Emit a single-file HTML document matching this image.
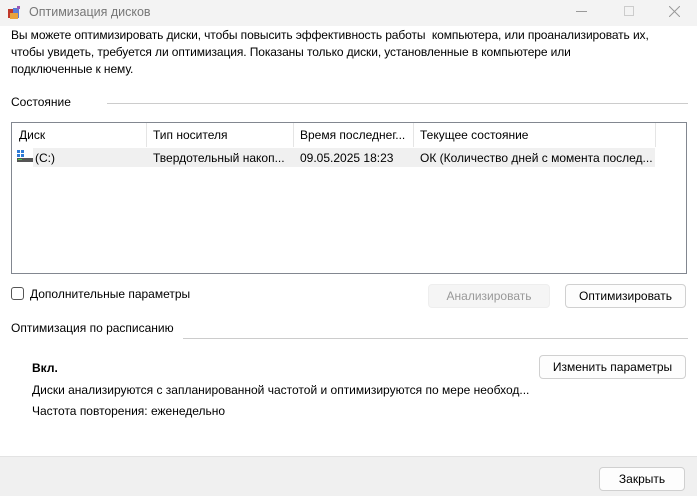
<!DOCTYPE html>
<html><head><meta charset="utf-8"><style>
*{margin:0;padding:0;box-sizing:border-box}
body{width:697px;height:496px;background:#fff;font-family:"Liberation Sans",sans-serif;font-size:12px;color:#000;position:relative;overflow:hidden}
.a{position:absolute;white-space:nowrap}
.btn{position:absolute;border:1px solid #d0d0d0;border-radius:4px;background:#fdfdfd;text-align:center;line-height:22px;font-size:12px}
</style></head><body>
<div class="a" style="left:0;top:0;width:697px;height:26px;background:#f3f3f3"></div>
<svg class="a" style="left:7px;top:6px" width="14" height="14"><rect x="1" y="3" width="6" height="9" fill="#c0392b"/><rect x="6" y="2" width="6" height="10" fill="#5b7bd5"/><rect x="3" y="7" width="8" height="6" fill="#e8a33c"/><rect x="10" y="0" width="3" height="3" fill="#9b59b6"/></svg>
<div class="a" style="left:29px;top:5px;color:#777;font-size:12.5px">Оптимизация дисков</div>
<div class="a" style="left:576px;top:11px;width:11px;height:1px;background:#999"></div>
<div class="a" style="left:624px;top:6px;width:10px;height:10px;border:1px solid #ccc"></div>
<svg class="a" style="left:669px;top:6px" width="11" height="11"><path d="M0 0L11 11M11 0L0 11" stroke="#999" stroke-width="1"/></svg>
<div class="a" style="left:11px;top:27px;line-height:17px;font-size:12px;letter-spacing:-0.1px">Вы можете оптимизировать диски, чтобы повысить эффективность работы&nbsp; компьютера, или проанализировать их,<br>чтобы увидеть, требуется ли оптимизация. Показаны только диски, установленные в компьютере или<br>подключенные к нему.</div>
<div class="a" style="left:11px;top:95px">Состояние</div>
<div class="a" style="left:107px;top:103px;width:581px;height:1px;background:#ccc"></div>
<div class="a" style="left:11px;top:122px;width:676px;height:152px;border:1px solid #828790"></div>
<div class="a" style="left:146px;top:123px;width:1px;height:24px;background:#e5e5e5"></div>
<div class="a" style="left:293px;top:123px;width:1px;height:24px;background:#e5e5e5"></div>
<div class="a" style="left:413px;top:123px;width:1px;height:24px;background:#e5e5e5"></div>
<div class="a" style="left:655px;top:123px;width:1px;height:24px;background:#e5e5e5"></div>
<div class="a" style="left:19px;top:128px">Диск</div>
<div class="a" style="left:153px;top:128px">Тип носителя</div>
<div class="a" style="left:300px;top:128px">Время последнег...</div>
<div class="a" style="left:420px;top:128px">Текущее состояние</div>
<div class="a" style="left:33px;top:148px;width:622px;height:19px;background:#f0f0f0"></div>
<svg class="a" style="left:17px;top:150px" width="16" height="13"><rect x="0" y="0" width="3" height="3" fill="#2f7bd6"/><rect x="4" y="0" width="3" height="3" fill="#2f7bd6"/><rect x="0" y="4" width="3" height="3" fill="#2f7bd6"/><rect x="4" y="4" width="3" height="3" fill="#2f7bd6"/><rect x="0" y="8" width="16" height="4" fill="#555"/><rect x="1" y="9" width="4" height="1" fill="#4c4"/></svg>
<div class="a" style="left:35px;top:151px">(C:)</div>
<div class="a" style="left:153px;top:151px">Твердотельный накоп...</div>
<div class="a" style="left:300px;top:151px">09.05.2025 18:23</div>
<div class="a" style="left:420px;top:151px">ОК (Количество дней с момента послед...</div>
<div class="a" style="left:11px;top:287px;width:13px;height:13px;border:1px solid #555;border-radius:3px"></div>
<div class="a" style="left:30px;top:287px">Дополнительные параметры</div>
<div class="btn" style="left:428px;top:284px;width:122px;height:24px;background:#f5f5f5;border-color:#eee;color:#999">Анализировать</div>
<div class="btn" style="left:565px;top:284px;width:121px;height:24px">Оптимизировать</div>
<div class="a" style="left:11px;top:321px">Оптимизация по расписанию</div>
<div class="a" style="left:183px;top:338px;width:505px;height:1px;background:#ccc"></div>
<div class="a" style="left:32px;top:361px;font-weight:bold">Вкл.</div>
<div class="btn" style="left:539px;top:355px;width:147px;height:24px">Изменить параметры</div>
<div class="a" style="left:32px;top:383px">Диски анализируются с запланированной частотой и оптимизируются по мере необход...</div>
<div class="a" style="left:32px;top:404px">Частота повторения: еженедельно</div>
<div class="a" style="left:0;top:456px;width:697px;height:40px;background:#f0f0f0;border-top:1px solid #e3e3e3"></div>
<div class="btn" style="left:599px;top:467px;width:86px;height:24px">Закрыть</div>
</body></html>
